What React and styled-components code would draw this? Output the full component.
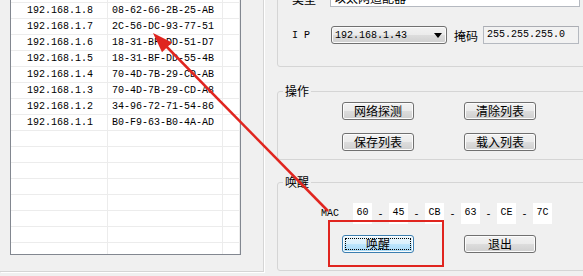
import React from "react";
import styled, { createGlobalStyle, css } from "styled-components";

const GlobalStyle = createGlobalStyle`
  html, body {
    margin: 0;
    padding: 0;
    background: #f0f0f0;
  }
  body {
    font-family: "Noto Sans CJK SC", sans-serif;
    font-size: 12px;
    color: #000;
  }
`;

const hosts = [
  ["", ""],
  ["192.168.1.8", "08-62-66-2B-25-AB"],
  ["192.168.1.7", "2C-56-DC-93-77-51"],
  ["192.168.1.6", "18-31-BF-DD-51-D7"],
  ["192.168.1.5", "18-31-BF-DD-55-4B"],
  ["192.168.1.4", "70-4D-7B-29-CD-AB"],
  ["192.168.1.3", "70-4D-7B-29-CD-A8"],
  ["192.168.1.2", "34-96-72-71-54-86"],
  ["192.168.1.1", "B0-F9-63-B0-4A-AD"],
  ["", ""],
  ["", ""],
  ["", ""],
  ["", ""],
  ["", ""],
  ["", ""],
  ["", ""],
  ["", ""],
];

const macParts = ["60", "45", "CB", "63", "CE", "7C"];

const mono = `"Liberation Mono", "DejaVu Sans Mono", monospace`;

export default function App() {
  return (
    <Page>
      <GlobalStyle />
      <Root>
        <LeftPanel>
          <HostList>
            {hosts.map(([ip, mac], i) => (
              <Row key={i}>
                <Cell $center>{ip}</Cell>
                <Cell>{mac}</Cell>
                <Cell />
              </Row>
            ))}
          </HostList>
        </LeftPanel>

        <RightPanel>
          <Group $height={83}>
            <Fields>
              <FieldRow>
                <Label>类型</Label>
                <TextField $width={250}>以太网适配器</TextField>
              </FieldRow>
              <FieldRow>
                <Label $mono>I P</Label>
                <Combo>
                  <span>192.168.1.43</span>
                  <svg width="8" height="5" viewBox="0 0 8 5">
                    <path d="M0 0 L8 0 L4 5 Z" fill="#000" />
                  </svg>
                </Combo>
                <MaskLabel>掩码</MaskLabel>
                <TextField $width={96} $readonly $mono>
                  255.255.255.0
                </TextField>
              </FieldRow>
            </Fields>
          </Group>

          <Group $top={17}>
            <Legend>操作</Legend>
            <ButtonGrid $top={4} $bottom={8} $rowGap={13}>
              <Button>网络探测</Button>
              <Button>清除列表</Button>
              <Button>保存列表</Button>
              <Button>载入列表</Button>
            </ButtonGrid>
          </Group>

          <Group $top={15}>
            <Legend>唤醒</Legend>
            <MacRow>
              <MacLabel>MAC</MacLabel>
              {macParts.map((part, i) => (
                <React.Fragment key={i}>
                  {i > 0 && <Dash>-</Dash>}
                  <MacBox>{part}</MacBox>
                </React.Fragment>
              ))}
            </MacRow>
            <ButtonGrid $top={11} $bottom={17} $rowGap={0}>
              <Button $focused>唤醒</Button>
              <Button>退出</Button>
            </ButtonGrid>
          </Group>
        </RightPanel>
      </Root>

      <Highlight />
      <ArrowLayer width="583" height="276" viewBox="0 0 583 276">
        <line x1="328" y1="211" x2="162" y2="42" stroke="#e0251f" strokeWidth="2.5" />
        <path d="M153 33 L162 52.2 L172 42.4 Z" fill="#e0251f" />
      </ArrowLayer>
    </Page>
  );
}

const Page = styled.div`
  position: relative;
  width: 583px;
  height: 276px;
  overflow: hidden;
`;

const Root = styled.div`
  display: flex;
  margin-top: -16px;
`;

const LeftPanel = styled.div`
  flex-shrink: 0;
  box-sizing: border-box;
  width: 264px;
  height: 288px;
  padding: 2px 0 0 10px;
  border-right: 1px solid #d5d5d5;
  border-bottom: 1px solid #d5d5d5;
  box-shadow: 1px 1px 0 #fff;
`;

const HostList = styled.div`
  box-sizing: border-box;
  width: 231px;
  height: 269px;
  border: 1px solid #828790;
  background: #fff;
  overflow: hidden;
`;

const Row = styled.div`
  display: grid;
  grid-template-columns: 97px 115px 1fr;
  box-sizing: border-box;
  height: 16px;
  border-bottom: 1px solid #ececec;
`;

const Cell = styled.div`
  box-sizing: border-box;
  border-right: 1px solid #ececec;
  padding-left: ${(p) => (p.$center ? 2 : 4)}px;
  text-align: ${(p) => (p.$center ? "center" : "left")};
  font-family: ${mono};
  font-size: 10px;
  line-height: 15px;
  white-space: nowrap;
`;

const RightPanel = styled.div`
  display: flex;
  flex-direction: column;
  align-items: flex-start;
  padding-left: 13px;
  min-width: 0;
`;

const Group = styled.fieldset`
  box-sizing: border-box;
  width: 330px;
  ${(p) => p.$height && `height: ${p.$height}px;`}
  margin: ${(p) => p.$top || 0}px 0 0 0;
  padding: 0;
  border: 1px solid #d5d5d5;
  border-radius: 3px;
  min-width: 0;
`;

const Legend = styled.legend`
  margin-left: 5px;
  padding: 0 2px;
  font-size: 12px;
  line-height: 14px;
`;

const Fields = styled.div`
  display: flex;
  flex-direction: column;
  gap: 19px;
  padding: 4px 0 0 14px;
`;

const FieldRow = styled.div`
  display: flex;
  align-items: center;
  height: 18px;
`;

const Label = styled.span`
  width: 38px;
  flex-shrink: 0;
  font-family: ${(p) => (p.$mono ? mono : `"Noto Sans CJK SC", sans-serif`)};
  font-size: ${(p) => (p.$mono ? 10 : 12)}px;
  white-space: pre;
`;

const TextField = styled.div`
  box-sizing: border-box;
  width: ${(p) => p.$width}px;
  height: 18px;
  padding-left: 3px;
  border: 1px solid #b5b9c0;
  border-top-color: #abadb3;
  background: ${(p) => (p.$readonly ? "#f2f2f2" : "#fff")};
  font-family: ${(p) => (p.$mono ? mono : `"Noto Sans CJK SC", sans-serif`)};
  font-size: ${(p) => (p.$mono ? 10 : 12)}px;
  line-height: 16px;
  white-space: nowrap;
  overflow: hidden;
`;

const Combo = styled.div`
  box-sizing: border-box;
  display: flex;
  align-items: center;
  justify-content: space-between;
  width: 116px;
  height: 18px;
  margin-left: 1px;
  padding: 0 4px 0 3px;
  border: 1px solid #707070;
  border-radius: 3px;
  background: linear-gradient(#f2f2f2 0%, #ebebeb 49%, #dddddd 50%, #cfcfcf 100%);
  box-shadow: inset 0 0 0 1px #fbfbfb;
  font-family: ${mono};
  font-size: 10px;
`;

const MaskLabel = styled.span`
  margin: 0 5px 0 7px;
  font-size: 12px;
`;

const ButtonGrid = styled.div`
  display: grid;
  grid-template-columns: 72px 72px;
  column-gap: 50px;
  row-gap: ${(p) => p.$rowGap}px;
  padding: ${(p) => p.$top}px 0 ${(p) => p.$bottom}px 64px;
`;

const Button = styled.button`
  box-sizing: border-box;
  width: 72px;
  height: 18px;
  padding: 0;
  border: 1px solid #707070;
  border-radius: 3px;
  background: linear-gradient(#f2f2f2 0%, #ebebeb 49%, #dddddd 50%, #cfcfcf 100%);
  box-shadow: inset 0 0 0 1px #fcfcfc;
  font-family: "Noto Sans CJK SC", sans-serif;
  font-size: 12px;
  line-height: 16px;
  color: #000;
  ${(p) =>
    p.$focused &&
    css`
      border-color: #3c7fb1;
      background: linear-gradient(#eaf6fd 0%, #d9f0fc 49%, #bee6fd 50%, #a7d9f5 100%);
      outline: 1px dotted #000;
      outline-offset: -4px;
    `}
`;

const MacRow = styled.div`
  display: flex;
  align-items: center;
  height: 21px;
  margin-top: 14px;
  padding-left: 43px;
  font-family: ${mono};
  font-size: 10px;
`;

const MacLabel = styled.span`
  width: 32px;
`;

const MacBox = styled.div`
  box-sizing: border-box;
  width: 19px;
  height: 21px;
  background: #fff;
  text-align: center;
  line-height: 20px;
`;

const Dash = styled.span`
  width: 17px;
  text-align: center;
  padding-top: 2px;
`;

const Highlight = styled.div`
  position: absolute;
  left: 328px;
  top: 220px;
  width: 116px;
  height: 47px;
  box-sizing: border-box;
  border: 2px solid #e0251f;
  pointer-events: none;
`;

const ArrowLayer = styled.svg`
  position: absolute;
  left: 0;
  top: 0;
  pointer-events: none;
`;
